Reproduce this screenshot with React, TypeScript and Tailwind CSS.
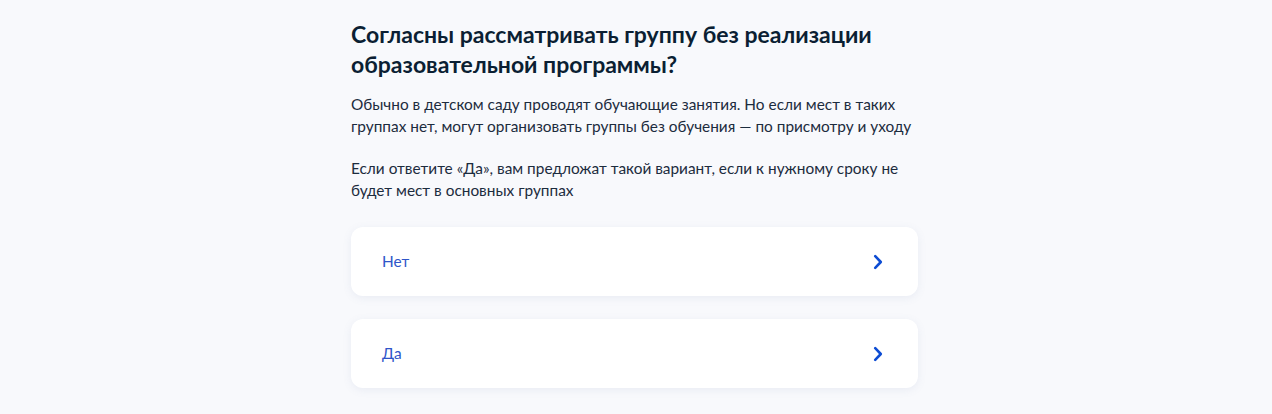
import React from "react";

function Chevron() {
  return (
    <svg width="10" height="16" viewBox="0 0 10 16" fill="none">
      <path d="M2.2 2.2l5.6 5.8-5.6 5.8" stroke="#0d4cd3" strokeWidth="2.6" strokeLinecap="round" strokeLinejoin="round" />
    </svg>
  );
}

function Option({ label }: { label: string }) {
  return (
    <div className="flex h-[69px] items-center justify-between rounded-[12px] bg-white pl-[31px] pr-[35px] shadow-[0_2px_8px_rgba(100,120,170,0.10)]">
      <span className="text-[15.4px] text-[#2f55c9]">{label}</span>
      <Chevron />
    </div>
  );
}

export default function App() {
  return (
    <div className="min-h-[414px] w-full bg-[#f8f9fc]" style={{ fontFamily: "Lato, 'Noto Sans', sans-serif" }}>
      <div className="flex justify-center pr-[3px]">
        <div className="w-[567px] pt-[19px]">
          <h1 className="text-[23px] font-bold leading-[30px] text-[#0b1f33]">
            Согласны рассматривать группу без реализации образовательной программы?
          </h1>
          <p className="mt-[14px] pr-[4px] text-[15.4px] leading-[22px] text-[#1c2c3e]">
            Обычно в детском саду проводят обучающие занятия. Но если мест в таких группах нет, могут организовать группы без обучения — по присмотру и уходу
          </p>
          <p className="mt-[20px] pr-[4px] text-[15.4px] leading-[22px] text-[#1c2c3e]">
            Если ответите «Да», вам предложат такой вариант, если к нужному сроку не будет мест в основных группах
          </p>
          <div className="mt-[26px] flex flex-col gap-[23px]">
            <Option label="Нет" />
            <Option label="Да" />
          </div>
        </div>
      </div>
    </div>
  );
}
